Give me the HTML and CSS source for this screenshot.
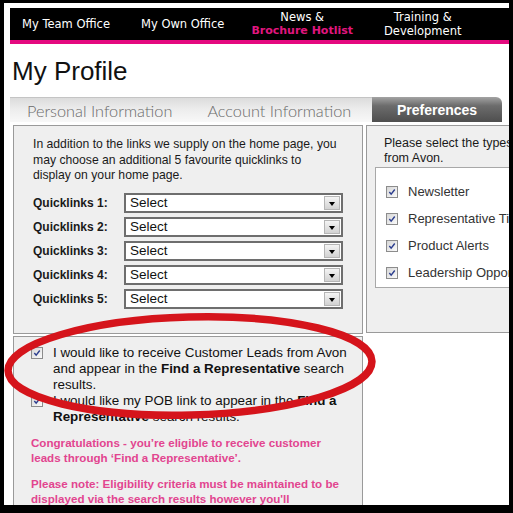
FILE: index.html
```html
<!DOCTYPE html>
<html>
<head>
<meta charset="utf-8">
<link rel="stylesheet" href="styles.css">
</head>
<body>
<div class="frame">
  <nav class="topnav">
    <a class="nav-item n1">My Team Office</a>
    <a class="nav-item n2">My Own Office</a>
    <a class="nav-item two n3"><span>News &amp;</span><span class="hot">Brochure Hotlist</span></a>
    <a class="nav-item two"><span>Training &amp;</span><span>Development</span></a>
  </nav>
  <h1 class="title">My Profile</h1>
  <div class="tabs">
    <div class="tabbar">
      <span class="tab">Personal Information</span>
      <span class="tab">Account Information</span>
    </div>
    <div class="tab-active">Preferences</div>
  </div>
  <div class="content">
    <div class="col-left">
      <section class="panel quick">
        <p class="intro">In addition to the links we supply on the home page, you may choose an additional 5 favourite quicklinks to display on your home page.</p>
        <div class="ql-rows">
          <div class="ql-row"><span class="ql-label">Quicklinks 1:</span><div class="select"><span>Select</span><i class="drop"></i></div></div>
          <div class="ql-row"><span class="ql-label">Quicklinks 2:</span><div class="select"><span>Select</span><i class="drop"></i></div></div>
          <div class="ql-row"><span class="ql-label">Quicklinks 3:</span><div class="select"><span>Select</span><i class="drop"></i></div></div>
          <div class="ql-row"><span class="ql-label">Quicklinks 4:</span><div class="select"><span>Select</span><i class="drop"></i></div></div>
          <div class="ql-row"><span class="ql-label">Quicklinks 5:</span><div class="select"><span>Select</span><i class="drop"></i></div></div>
        </div>
      </section>
      <section class="panel leads">
        <div class="lead-item">
          <span class="cb"><svg viewBox="0 0 12 12"><path d="M2.8 6 L5 8.6 L9.3 3"/></svg></span>
          <p>I would like to receive Customer Leads from Avon and appear in the <b>Find a Representative</b> search results.</p>
        </div>
        <div class="lead-item">
          <span class="cb"><svg viewBox="0 0 12 12"><path d="M2.8 6 L5 8.6 L9.3 3"/></svg></span>
          <p>I would like my POB link to appear in the <b>Find a Representative</b> search results.</p>
        </div>
        <p class="note">Congratulations - you’re eligible to receive customer leads through ‘Find a Representative’.</p>
        <p class="note">Please note: Eligibility criteria must be maintained to be displayed via the search results however you'll automatically be re-listed once criteria is met again.</p>
      </section>
    </div>
    <section class="panel prefs">
      <p class="prefs-intro">Please select the types of communication you would like to receive<br>from Avon.</p>
      <ul class="pref-list">
        <li><span class="cb"><svg viewBox="0 0 12 12"><path d="M2.8 6 L5 8.6 L9.3 3"/></svg></span>Newsletter</li>
        <li><span class="cb"><svg viewBox="0 0 12 12"><path d="M2.8 6 L5 8.6 L9.3 3"/></svg></span>Representative Tips</li>
        <li><span class="cb"><svg viewBox="0 0 12 12"><path d="M2.8 6 L5 8.6 L9.3 3"/></svg></span>Product Alerts</li>
        <li><span class="cb"><svg viewBox="0 0 12 12"><path d="M2.8 6 L5 8.6 L9.3 3"/></svg></span>Leadership Opportunities</li>
      </ul>
    </section>
  </div>
  <svg class="ring" viewBox="0 0 513 513" width="513" height="513">
    <ellipse cx="190" cy="366" rx="182" ry="49" transform="rotate(-1.5 190 366)"/>
  </svg>
</div>
</body>
</html>
```

FILE: styles.css
```css
* { box-sizing: border-box; margin: 0; padding: 0; }
body { margin: 0; width: 513px; height: 513px; overflow: hidden; background: #fff; }

.frame {
  position: relative;
  width: 513px;
  height: 513px;
  border-style: solid;
  border-color: #000;
  border-width: 3px 4px 8px 4px;
  overflow: hidden;
  background: #fff;
  font-family: "Liberation Sans", Arial, sans-serif;
}

/* top navigation */
.topnav {
  display: flex;
  align-items: center;
  height: 36px;
  margin: 5px 0 0 6px;
  padding-left: 12px;
  background: #000;
  border-bottom: 4px solid #e4097f;
  font-family: "DejaVu Sans", sans-serif;
  font-size: 11.5px;
  color: #fff;
}
.nav-item { display: flex; flex-direction: column; align-items: center; line-height: 14px; }
.n1 { margin-right: 31px; }
.n2 { margin-right: 27px; }
.n3 { margin-right: 31px; }
.hot { color: #e0167f; font-weight: bold; font-size: 11px; }

.title {
  margin: 14px 0 0 8px;
  font-size: 26px;
  line-height: 27px;
  font-weight: normal;
  color: #111;
}

/* tabs */
.tabs { display: flex; height: 25px; margin: 12px 0 0 6px; }
.tabbar {
  width: 362px;
  display: flex;
  align-items: center;
  gap: 35px;
  padding-left: 17px;
  border-top: 1px solid #c4c4c4;
  background: linear-gradient(180deg, #dcdcdc 0%, #ececec 45%, #f8f8f8 100%);
  font-family: Lato, sans-serif;
  font-weight: 300;
  font-size: 16.3px;
  color: #6a6a6a;
}
.tab-active {
  width: 130px;
  display: flex;
  align-items: center;
  justify-content: center;
  border-radius: 0 6px 0 0;
  background: linear-gradient(180deg, #a3a3a3 0%, #6c6c6c 35%, #4e4e4e 100%);
  color: #fff;
  font-weight: bold;
  font-size: 14px;
}

/* content */
.content { display: flex; gap: 3px; margin: 3px 0 0 9px; height: 400px; }
.col-left { width: 350px; flex: none; display: flex; flex-direction: column; gap: 2px; }
.panel { background: #efefef; border: 1px solid #9a9a9a; }

.quick { height: 209px; padding: 11px 20px 0 19px; }
.intro { font-size: 12.2px; line-height: 15.5px; color: #1a1a1a; }
.ql-rows { display: flex; flex-direction: column; gap: 4px; margin-top: 9px; }
.ql-row { display: flex; align-items: center; height: 20px; }
.ql-label { width: 91px; flex: none; font-weight: bold; font-size: 12px; color: #1a1a1a; }
.select {
  width: 219px;
  flex: none;
  height: 20px;
  display: flex;
  align-items: center;
  justify-content: space-between;
  padding: 0 1px 0 4px;
  background: #fff;
  border: 2px solid #6e6e6e;
  font-size: 13.5px;
  color: #111;
}
.drop {
  position: relative;
  width: 16px;
  height: 14px;
  border: 1px solid #b5b5b5;
  background: linear-gradient(180deg, #f4f4f4, #d2d2d2);
}
.drop::after {
  content: "";
  position: absolute;
  left: 4px;
  top: 5px;
  border-left: 3.5px solid transparent;
  border-right: 3.5px solid transparent;
  border-top: 4px solid #000;
}

/* checkboxes */
.cb {
  flex: none;
  width: 12px;
  height: 12px;
  border: 1px solid #8c8c8c;
  background: linear-gradient(135deg, #d6d6d6, #fbfbfb);
  display: inline-flex;
}
.cb svg { width: 10px; height: 10px; }
.cb path { fill: none; stroke: #2c3e8e; stroke-width: 1.7; }

/* leads */
.leads { flex: 1; padding: 8px 6px 0 17px; }
.lead-item { display: flex; gap: 10px; align-items: flex-start; }
.lead-item .cb { margin-top: 2px; }
.lead-item p { font-size: 13.4px; line-height: 16px; color: #111; }
.note {
  margin-top: 10px;
  padding-right: 14px;
  font-size: 11.6px;
  font-weight: bold;
  line-height: 15px;
  color: #e2458f;
}
.note + .note { margin-top: 11px; }

/* preferences */
.prefs { width: 330px; flex: none; height: 208px; padding: 10px 0 0 8px; }
.prefs-intro { margin-left: 9px; font-size: 12.5px; line-height: 15px; color: #1a1a1a; white-space: nowrap; }
.pref-list {
  list-style: none;
  margin-top: 1px;
  background: #fff;
  border: 1px solid #a8a8a8;
  padding: 10px 0 1px 10px;
}
.pref-list li { display: flex; align-items: center; gap: 10px; height: 27px; font-size: 13px; color: #333; white-space: nowrap; }

/* annotation ring */
.ring { position: absolute; left: -4px; top: -3px; pointer-events: none; }
.ring ellipse { fill: none; stroke: #d5141b; stroke-width: 7.5; }
```
